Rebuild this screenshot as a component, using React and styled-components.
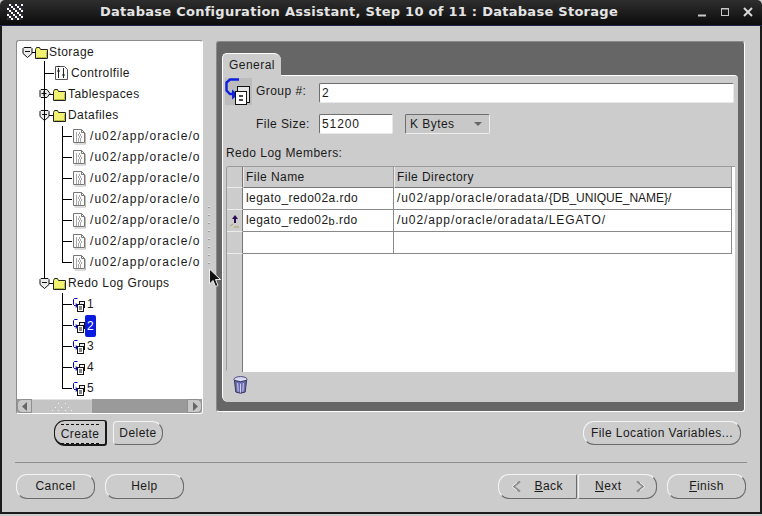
import React from "react";
import styled, { createGlobalStyle } from "styled-components";

const GlobalStyle = createGlobalStyle`
  html, body {
    margin: 0;
    padding: 0;
    background: #e6e6e6;
    overflow: hidden;
  }
  * { box-sizing: border-box; }
`;

const Window = styled.div`
  position: relative;
  width: 762px;
  height: 516px;
  display: flex;
  flex-direction: column;
  background: #cccccc;
  font-family: "Liberation Sans", Arial, sans-serif;
  font-size: 12px;
  letter-spacing: 0.45px;
  color: #1a1a1a;
`;

const TitleBar = styled.div`
  height: 26px;
  flex: none;
  display: flex;
  align-items: center;
  padding: 0 9px 2px 7px;
  background: linear-gradient(#2e2e2e, #0c0c0c);
  border-bottom: 1px solid #20264a;
  border-radius: 5px 5px 0 0;
  color: #e4e4e4;
`;

const TitleText = styled.div`
  flex: 1;
  text-align: center;
  font-family: "DejaVu Sans", sans-serif;
  font-weight: bold;
  font-size: 13px;
  letter-spacing: 0.27px;
  padding-right: 2px;
`;

const WinButtons = styled.div`
  display: flex;
  gap: 13px;
  align-items: center;
`;

const Body = styled.div`
  flex: 1;
  display: flex;
  flex-direction: column;
  border-left: 2px solid #1c1c1c;
  border-right: 2px solid #1c1c1c;
  border-bottom: 2px solid #1c1c1c;
  margin-bottom: 2px;
  min-height: 0;
`;

const Split = styled.div`
  display: flex;
  height: 374px;
  margin: 14px 0 0 14px;
`;

const TreePanel = styled.div`
  width: 187px;
  flex: none;
  display: flex;
  flex-direction: column;
  background: #ffffff;
  border: 1px solid;
  border-color: #8c8c8c #ffffff #ffffff #8c8c8c;
  border-radius: 3px;
  overflow: hidden;
`;

const Tree = styled.div`
  flex: 1;
  padding-top: 1px;
  overflow: hidden;
`;

const Row = styled.div`
  position: relative;
  height: 21px;
  display: flex;
  align-items: center;
  padding-left: ${(p) => p.$indent}px;
  white-space: nowrap;
`;

const Guide = styled.span`
  position: absolute;
  left: ${(p) => p.$x}px;
  top: ${(p) => p.$top || 0}px;
  bottom: ${(p) => p.$bottom || 0}px;
  width: 1px;
  background: #000000;
`;

const Branch = styled.span`
  position: absolute;
  left: ${(p) => p.$x}px;
  top: 10px;
  width: ${(p) => p.$w}px;
  height: 1px;
  background: #000000;
`;

const Label = styled.span`
  margin-left: ${(p) => p.$gap ?? 2}px;
  padding: 0 ${(p) => p.$pad ?? 1}px;
  line-height: ${(p) => (p.$selected ? 22 : 19)}px;
  ${(p) => p.$selected && "background: #0a1be0; color: #ffffff; border-radius: 2px;"}
`;

const PathText = styled.span`
  letter-spacing: ${(p) => p.$spacing || 0.9}px;
`;

const NameText = styled.span`
  letter-spacing: 0;
`;

const ScrollBar = styled.div`
  height: 14px;
  flex: none;
  display: flex;
  background: #9a9a9a;
`;

const ScrollBtn = styled.div`
  width: 15px;
  flex: none;
  display: flex;
  align-items: center;
  justify-content: center;
  background: #c8c8c8;
  border: 1px solid #8f8f8f;
  border-radius: ${(p) => (p.$right ? "0 5px 5px 0" : "5px 0 0 5px")};
`;

const Thumb = styled.div`
  width: 60px;
  flex: none;
  display: flex;
  align-items: center;
  justify-content: center;
  background: #c4c4c4;
  border-top: 1px solid #e0e0e0;
`;

const Spacer = styled.div`
  flex: 1;
`;

const Sash = styled.div`
  width: 13px;
  flex: none;
  display: flex;
  flex-direction: column;
  align-items: center;
  justify-content: center;
  gap: 6px;
  padding-top: 15px;
  padding-right: 1px;
`;

const SashDot = styled.span`
  width: 2px;
  height: 2px;
  background: linear-gradient(#e8e8e8 50%, #9a9a9a 50%);
`;

const TabPanel = styled.div`
  width: 529px;
  height: 371px;
  margin-top: 1px;
  flex: none;
  display: flex;
  flex-direction: column;
  padding: 11px 6px 9px 5px;
  background: #666666;
  border: 1px solid;
  border-color: #8a8a8a #ffffff #ffffff #8a8a8a;
  border-radius: 3px;
`;

const Tab = styled.div`
  width: 59px;
  height: 23px;
  flex: none;
  display: flex;
  align-items: center;
  justify-content: center;
  background: #cccccc;
  border-top: 1px solid #ffffff;
  border-left: 1px solid #ffffff;
  border-radius: 5px 7px 0 0;
  margin-bottom: -1px;
  position: relative;
`;

const TabBody = styled.div`
  flex: 1;
  display: flex;
  flex-direction: column;
  background: #cccccc;
  border-top: 1px solid #ffffff;
  border-left: 1px solid #ffffff;
  border-radius: 0 4px 0 6px;
  padding: 1px 4px 0 2px;
  min-height: 0;
`;

const FormRow = styled.div`
  display: flex;
  align-items: center;
  height: ${(p) => p.$h}px;
  margin-top: ${(p) => p.$mt || 0}px;
`;

const IconBox = styled.div`
  width: 27px;
  height: 28px;
  flex: none;
  display: flex;
  background: linear-gradient(#cccccc 1px, #bcbcbc 1px);
`;

const FieldLabel = styled.div`
  width: ${(p) => p.$w}px;
  flex: none;
  padding-left: ${(p) => p.$pl || 0}px;
`;

const TextInput = styled.div`
  width: ${(p) => p.$w}px;
  height: 20px;
  flex: none;
  display: flex;
  align-items: center;
  padding-left: 2px;
  margin-top: ${(p) => p.$mt || 0}px;
  background: #ffffff;
  border: 1px solid;
  border-color: #6e6e6e #e8e8e8 #e8e8e8 #6e6e6e;
  border-radius: 2px;
  letter-spacing: 0.9px;
`;

const Combo = styled.div`
  width: 85px;
  height: 20px;
  flex: none;
  margin-left: 12px;
  display: flex;
  align-items: center;
  justify-content: space-between;
  padding: 0 7px 0 4px;
  background: #c8c8c8;
  border: 1px solid;
  border-color: #6e6e6e #ededed #ededed #6e6e6e;
  border-radius: 2px;
`;

const Caret = styled.span`
  width: 0;
  height: 0;
  border-left: 4px solid transparent;
  border-right: 4px solid transparent;
  border-top: 4px solid #666666;
`;

const SectionLabel = styled.div`
  margin-top: 11px;
  height: 16px;
  line-height: 16px;
  padding-left: 1px;
`;

const Table = styled.div`
  width: 509px;
  height: 206px;
  margin: 5px 0 0 1px;
  flex: none;
  display: flex;
  flex-direction: column;
  background: #ffffff;
  border-top: 1px solid #9a9a9a;
  border-left: 1px solid #9a9a9a;
  border-radius: 3px 0 0 3px;
  overflow: hidden;
`;

const TableRow = styled.div`
  display: grid;
  grid-template-columns: 16px 151px 338px;
  height: ${(p) => p.$h}px;
  flex: ${(p) => (p.$fill ? 1 : "none")};
`;

const RowHead = styled.div`
  display: flex;
  align-items: center;
  justify-content: center;
  background: #cccccc;
  border-bottom: ${(p) => (p.$fill ? "none" : "1px solid #ececec")};
  border-right: 1px solid #777777;
`;

const HeadCell = styled.div`
  display: flex;
  align-items: center;
  padding-left: 2px;
  background: #cccccc;
  border-left: 1px solid #ececec;
  border-right: 1px solid #9a9a9a;
  border-bottom: 1px solid #777777;
`;

const Cell = styled.div`
  display: flex;
  align-items: center;
  padding: 0 0 1px 3px;
  background: #ffffff;
  border-right: 1px solid #8a8a8a;
  border-bottom: 1px solid #8a8a8a;
  white-space: pre;
`;

const SmallB = styled.span`
  font-size: 11px;
  position: relative;
  top: 1px;
`;

const TrashSlot = styled.div`
  padding: 3px 0 0 8px;
`;

const ButtonRow = styled.div`
  display: flex;
  align-items: center;
  height: 26px;
  margin: 6px 19px 0 52px;
  gap: 6px;
`;

const RoundButton = styled.div`
  width: ${(p) => p.$w}px;
  height: ${(p) => p.$h || 25}px;
  flex: none;
  display: flex;
  align-items: center;
  justify-content: ${(p) => (p.$between ? "space-between" : "center")};
  padding: ${(p) => (p.$between ? "0 9px 0 11px" : "0")};
  border: 1px solid;
  border-color: #f4f4f4 #6a6a6a #6a6a6a #f4f4f4;
  border-radius: ${(p) => p.$radius || "11px"};
  margin-left: ${(p) => p.$ml || 0}px;
  ${(p) => p.$auto && "margin-left: auto;"}
`;

const DefaultButton = styled(RoundButton)`
  border-color: #1a1a1a;
  border-width: 1px 2px 2px 1px;
  border-radius: 11px 3px 3px 11px;
`;

const FocusRing = styled.span`
  padding: 2px 0 1px;
  margin-top: 2px;
  border-top: 1px dashed #111111;
  border-bottom: 1px dashed #111111;
  line-height: 15px;
`;

const Divider = styled.div`
  height: 1px;
  margin: 16px 13px 0 13px;
  background: #8f8f8f;
`;

const Footer = styled.div`
  display: flex;
  align-items: center;
  height: 26px;
  margin: 10px 14px 0 14px;
`;

const Pointer = styled.svg`
  position: absolute;
  left: 208px;
  top: 268px;
`;

const noise = ["#223", "#eee", "#56a", "#d99", "#fff", "#333", "#8ab", "#ddd", "#445", "#bcd", "#fff", "#a7a", "#111", "#ccc", "#69c"];

const AppIcon = () => (
  <svg width="16" height="17" viewBox="0 0 16 17" shapeRendering="crispEdges">
    {Array.from({ length: 64 }).map((_, i) => (
      <rect
        key={i}
        x={(i % 8) * 2}
        y={Math.floor(i / 8) * 2 + 1}
        width="2"
        height="2"
        fill={noise[(i * 7 + (i % 5) * 3) % noise.length]}
      />
    ))}
  </svg>
);

const Toggle = ({ open }) => (
  <svg width="12" height="13" viewBox="0 0 12 13" style={{ flex: "none" }}>
    {open ? (
      <path d="M2 1.5h7l1 1v5l-4.500 4L1 7.500v-5z" fill="#ececec" stroke="#111" />
    ) : (
      <path d="M2 1.5h6l3 4-3 4H2l-1-1v-6z" fill="#ececec" stroke="#111" />
    )}
    <path d={open ? "M3 5.500h5" : "M2.500 5.500h5M5 3v5"} stroke="#111" />
  </svg>
);

const Folder = () => (
  <svg width="13" height="12" viewBox="0 0 13 12" style={{ flex: "none" }}>
    <path d="M0.500 2.500l1-2h3l1 2h7v9h-12z" fill="#f2f270" stroke="#222" />
    <path d="M1.500 10.500h10v-6" fill="none" stroke="#b8b840" />
  </svg>
);

const FileIcon = () => (
  <svg width="14" height="17" viewBox="0 0 14 17" style={{ flex: "none" }}>
    <path d="M1.5 1.5h8l3 3v10h-11z" fill="#fafafa" stroke="#777" />
    <path d="M9.5 1.5v3h3" fill="none" stroke="#777" />
    <path d="M13.5 5v11h-11" fill="none" stroke="#bbb" />
    <path d="M4 5h2M7 5h1M4 7h1M6 7h3M4 9h2M7 9h3M4 11h3M8 11h2M4 13h1M6 13h3" stroke="#555" strokeDasharray="1 1" />
  </svg>
);

const ControlIcon = () => (
  <svg width="15" height="17" viewBox="0 0 15 17" style={{ flex: "none" }}>
    <path d="M1.5 1.5h9l3 3v10h-12z" fill="#fafafa" stroke="#555" />
    <path d="M4.500 3v10M9.500 3v10" stroke="#222" />
    <path d="M3 6h3M8 10h3M3 1.500h3" stroke="#222" />
  </svg>
);

const GroupIcon = () => (
  <svg width="13" height="16" viewBox="0 0 13 16" style={{ flex: "none" }}>
    <path d="M5.500 1.500h-3l-1 1v5l1 1h1" fill="none" stroke="#0000c8" />
    <path d="M2 8.500h3M4 6.500l2 2-2 2z" fill="#0000c8" stroke="#0000c8" strokeWidth="0.6" />
    <rect x="7.500" y="4.500" width="5" height="6" fill="#eee" stroke="#111" />
    <rect x="5.500" y="7.500" width="6" height="7" fill="#fff" stroke="#111" />
    <path d="M7 10h3M7 12h3" stroke="#111" />
  </svg>
);

const BigGroupIcon = () => (
  <svg width="27" height="28" viewBox="0 0 27 28">
    <path d="M14 2.500H5L1.500 5.500v8l3.500 3.500h3" fill="none" stroke="#1020e0" strokeWidth="2.4" />
    <path d="M7 12.500l6 5-6 5z" fill="#1020e0" />
    <rect x="12.500" y="9.500" width="12" height="16" fill="#e6e6e6" stroke="#111" />
    <rect x="10.500" y="14.500" width="11" height="13" fill="#ffffff" stroke="#111" />
    <path d="M14 19h4M14 23h4" stroke="#111" strokeWidth="1.4" />
  </svg>
);

const Arrow = ({ right }) => (
  <svg width="6" height="9" viewBox="0 0 6 9">
    <path d={right ? "M1 0v9l5-4.500z" : "M5 0v9L0 4.500z"} fill="#666" />
  </svg>
);

const GripDots = () => (
  <svg width="22" height="10" viewBox="0 0 22 10" shapeRendering="crispEdges">
    {[[7, 1], [14, 1], [4, 5], [10, 5], [17, 5], [1, 8], [7, 8], [14, 8], [20, 8]].map(([x, y]) => (
      <rect key={`${x}-${y}`} x={x} y={y} width="1" height="1" fill="#f2f2f2" />
    ))}
  </svg>
);

const Marker = () => (
  <svg width="12" height="14" viewBox="0 0 12 14">
    <path d="M6 1l3 4H7v4H5V5H3z" fill="#2a0a55" />
    <path d="M1 12l3-2M5 13h5" stroke="#a8a060" fill="none" />
  </svg>
);

const Trash = () => (
  <svg width="15" height="20" viewBox="0 0 16 20">
    <ellipse cx="8" cy="4" rx="7" ry="3" fill="#d8d8ee" stroke="#44447a" />
    <path d="M1.500 5l1.500 12.500q5 2.500 10 0L14.500 5q-6.500 3-13 0z" fill="#6a6ab0" stroke="#33335f" />
    <path d="M5 8l.5 9M8 8.500v9.500M11 8l-.5 9" stroke="#d8d8ee" />
  </svg>
);

const Chevron = ({ right }) => (
  <svg width="12" height="13" viewBox="0 0 12 13">
    <g transform={right ? "" : "translate(12 0) scale(-1 1)"} fill="none">
      <path d="M2 1.500L8.500 6.500 2 11.500" stroke="#8a8a8a" strokeWidth="2" />
      <path d="M5 2.500L10 6.500 5 10.500" stroke="#f2f2f2" strokeWidth="1" />
    </g>
  </svg>
);

const Guides = ({ lines }) => lines.map((l) => <Guide key={l.x} $x={l.x} $top={l.top} $bottom={l.bottom} />);

const outer = { x: 27 };
const inner = { x: 45 };

const groups = ["1", "2", "3", "4", "5"];

const App = () => (
  <Window>
    <GlobalStyle />
    <TitleBar>
      <AppIcon />
      <TitleText>Database Configuration Assistant, Step 10 of 11 : Database Storage</TitleText>
      <WinButtons>
        <svg width="10" height="10" viewBox="0 0 10 10"><path d="M1 8.500h8" stroke="#c8c8c8" strokeWidth="2" /></svg>
        <svg width="10" height="10" viewBox="0 0 10 10"><rect x="1.500" y="1.500" width="7" height="7" fill="none" stroke="#c8c8c8" /><path d="M1 2h8" stroke="#c8c8c8" /></svg>
        <svg width="10" height="10" viewBox="0 0 10 10"><path d="M1 1l8 8M9 1l-8 8" stroke="#d8d8d8" strokeWidth="2" /></svg>
      </WinButtons>
    </TitleBar>
    <Body>
      <Split>
        <TreePanel>
          <Tree>
            <Row $indent={5}>
              <Branch $x={15} $w={4} />
              <Toggle open />
              <span style={{ width: 1 }} />
              <Folder />
              <Label $gap={0}>Storage</Label>
            </Row>
            <Row $indent={37}>
              <Guides lines={[{ ...outer, top: -2 }]} />
              <Branch $x={27} $w={10} />
              <ControlIcon />
              <Label $gap={1}>Controlfile</Label>
            </Row>
            <Row $indent={22}>
              <Guides lines={[outer]} />
              <Branch $x={32} $w={4} />
              <Toggle />
              <span style={{ width: 2 }} />
              <Folder />
              <Label $gap={1}>Tablespaces</Label>
            </Row>
            <Row $indent={22}>
              <Guides lines={[outer]} />
              <Branch $x={32} $w={4} />
              <Toggle open />
              <span style={{ width: 2 }} />
              <Folder />
              <Label $gap={1}>Datafiles</Label>
            </Row>
            {[0, 1, 2, 3, 4, 5, 6].map((i) => (
              <Row key={i} $indent={55}>
                <Guides lines={[outer, i === 6 ? { ...inner, bottom: 10 } : inner]} />
                <Branch $x={45} $w={10} />
                <FileIcon />
                <Label $gap={3}><PathText $spacing={1.05}>/u02/app/oracle/o</PathText></Label>
              </Row>
            ))}
            <Row $indent={22}>
              <Guides lines={[{ ...outer, bottom: 16 }]} />
              <Branch $x={32} $w={4} />
              <Toggle open />
              <span style={{ width: 2 }} />
              <Folder />
              <Label $gap={1}>Redo Log Groups</Label>
            </Row>
            {groups.map((g, i) => (
              <Row key={g} $indent={55}>
                <Guides lines={[i === 4 ? { ...inner, top: -1, bottom: 10 } : { ...inner, top: -1 }]} />
                <Branch $x={45} $w={10} />
                <GroupIcon />
                <Label $gap={0} $pad={2} $selected={g === "2"}>{g}</Label>
              </Row>
            ))}
          </Tree>
          <ScrollBar>
            <ScrollBtn><Arrow /></ScrollBtn>
            <Thumb><GripDots /></Thumb>
            <Spacer />
            <ScrollBtn $right><Arrow right /></ScrollBtn>
          </ScrollBar>
        </TreePanel>
        <Sash>
          {[0, 1, 2, 3, 4, 5, 6, 7].map((i) => <SashDot key={i} />)}
        </Sash>
        <TabPanel>
          <Tab>General</Tab>
          <TabBody>
            <FormRow $h={28}>
              <IconBox><BigGroupIcon /></IconBox>
              <FieldLabel $w={67} $pl={4}>Group #:</FieldLabel>
              <TextInput $w={415} $mt={3}>2</TextInput>
            </FormRow>
            <FormRow $h={20} $mt={9}>
              <FieldLabel $w={94} $pl={31}>File Size:</FieldLabel>
              <TextInput $w={74}>51200</TextInput>
              <Combo>K Bytes<Caret /></Combo>
            </FormRow>
            <SectionLabel>Redo Log Members:</SectionLabel>
            <Table>
              <TableRow $h={21}>
                <RowHead />
                <HeadCell>File Name</HeadCell>
                <HeadCell>File Directory</HeadCell>
              </TableRow>
              <TableRow $h={22}>
                <RowHead />
                <Cell>legato_redo02a.rdo</Cell>
                <Cell><PathText>/u02/app/oracle/oradata/</PathText><NameText>{"{DB_UNIQUE_NAME}/"}</NameText></Cell>
              </TableRow>
              <TableRow $h={22}>
                <RowHead><Marker /></RowHead>
                <Cell>legato_redo02<SmallB>b</SmallB>.rdo</Cell>
                <Cell><PathText>/u02/app/oracle/oradata/LEGATO/</PathText></Cell>
              </TableRow>
              <TableRow $h={22}>
                <RowHead />
                <Cell />
                <Cell />
              </TableRow>
              <TableRow $fill>
                <RowHead $fill />
              </TableRow>
            </Table>
            <TrashSlot><Trash /></TrashSlot>
          </TabBody>
        </TabPanel>
      </Split>
      <ButtonRow>
        <DefaultButton $w={53} $h={26}><FocusRing>Create</FocusRing></DefaultButton>
        <RoundButton $w={50} $h={24} $radius="4px 11px 11px 4px">Delete</RoundButton>
        <RoundButton $w={158} $h={24} $auto>File Location Variables...</RoundButton>
      </ButtonRow>
      <Divider />
      <Footer>
        <RoundButton $w={79}>Cancel</RoundButton>
        <RoundButton $w={79} $ml={10}>Help</RoundButton>
        <RoundButton $w={79} $auto $between $radius="11px 2px 2px 11px">
          <Chevron />
          <span style={{ paddingRight: 4 }}><u>B</u>ack</span>
        </RoundButton>
        <RoundButton $w={79} $ml={1} $between $radius="2px 11px 11px 2px">
          <span style={{ paddingLeft: 5 }}><u>N</u>ext</span>
          <Chevron right />
        </RoundButton>
        <RoundButton $w={79} $ml={10}><span><u>F</u>inish</span></RoundButton>
      </Footer>
    </Body>
    <Pointer width="13" height="21" viewBox="0 0 13 21">
      <path d="M1.500 1v15l3.500-3.500 2.500 6 2.500-1-2.500-6h5z" fill="#111" stroke="#eee" />
    </Pointer>
  </Window>
);

export default App;
